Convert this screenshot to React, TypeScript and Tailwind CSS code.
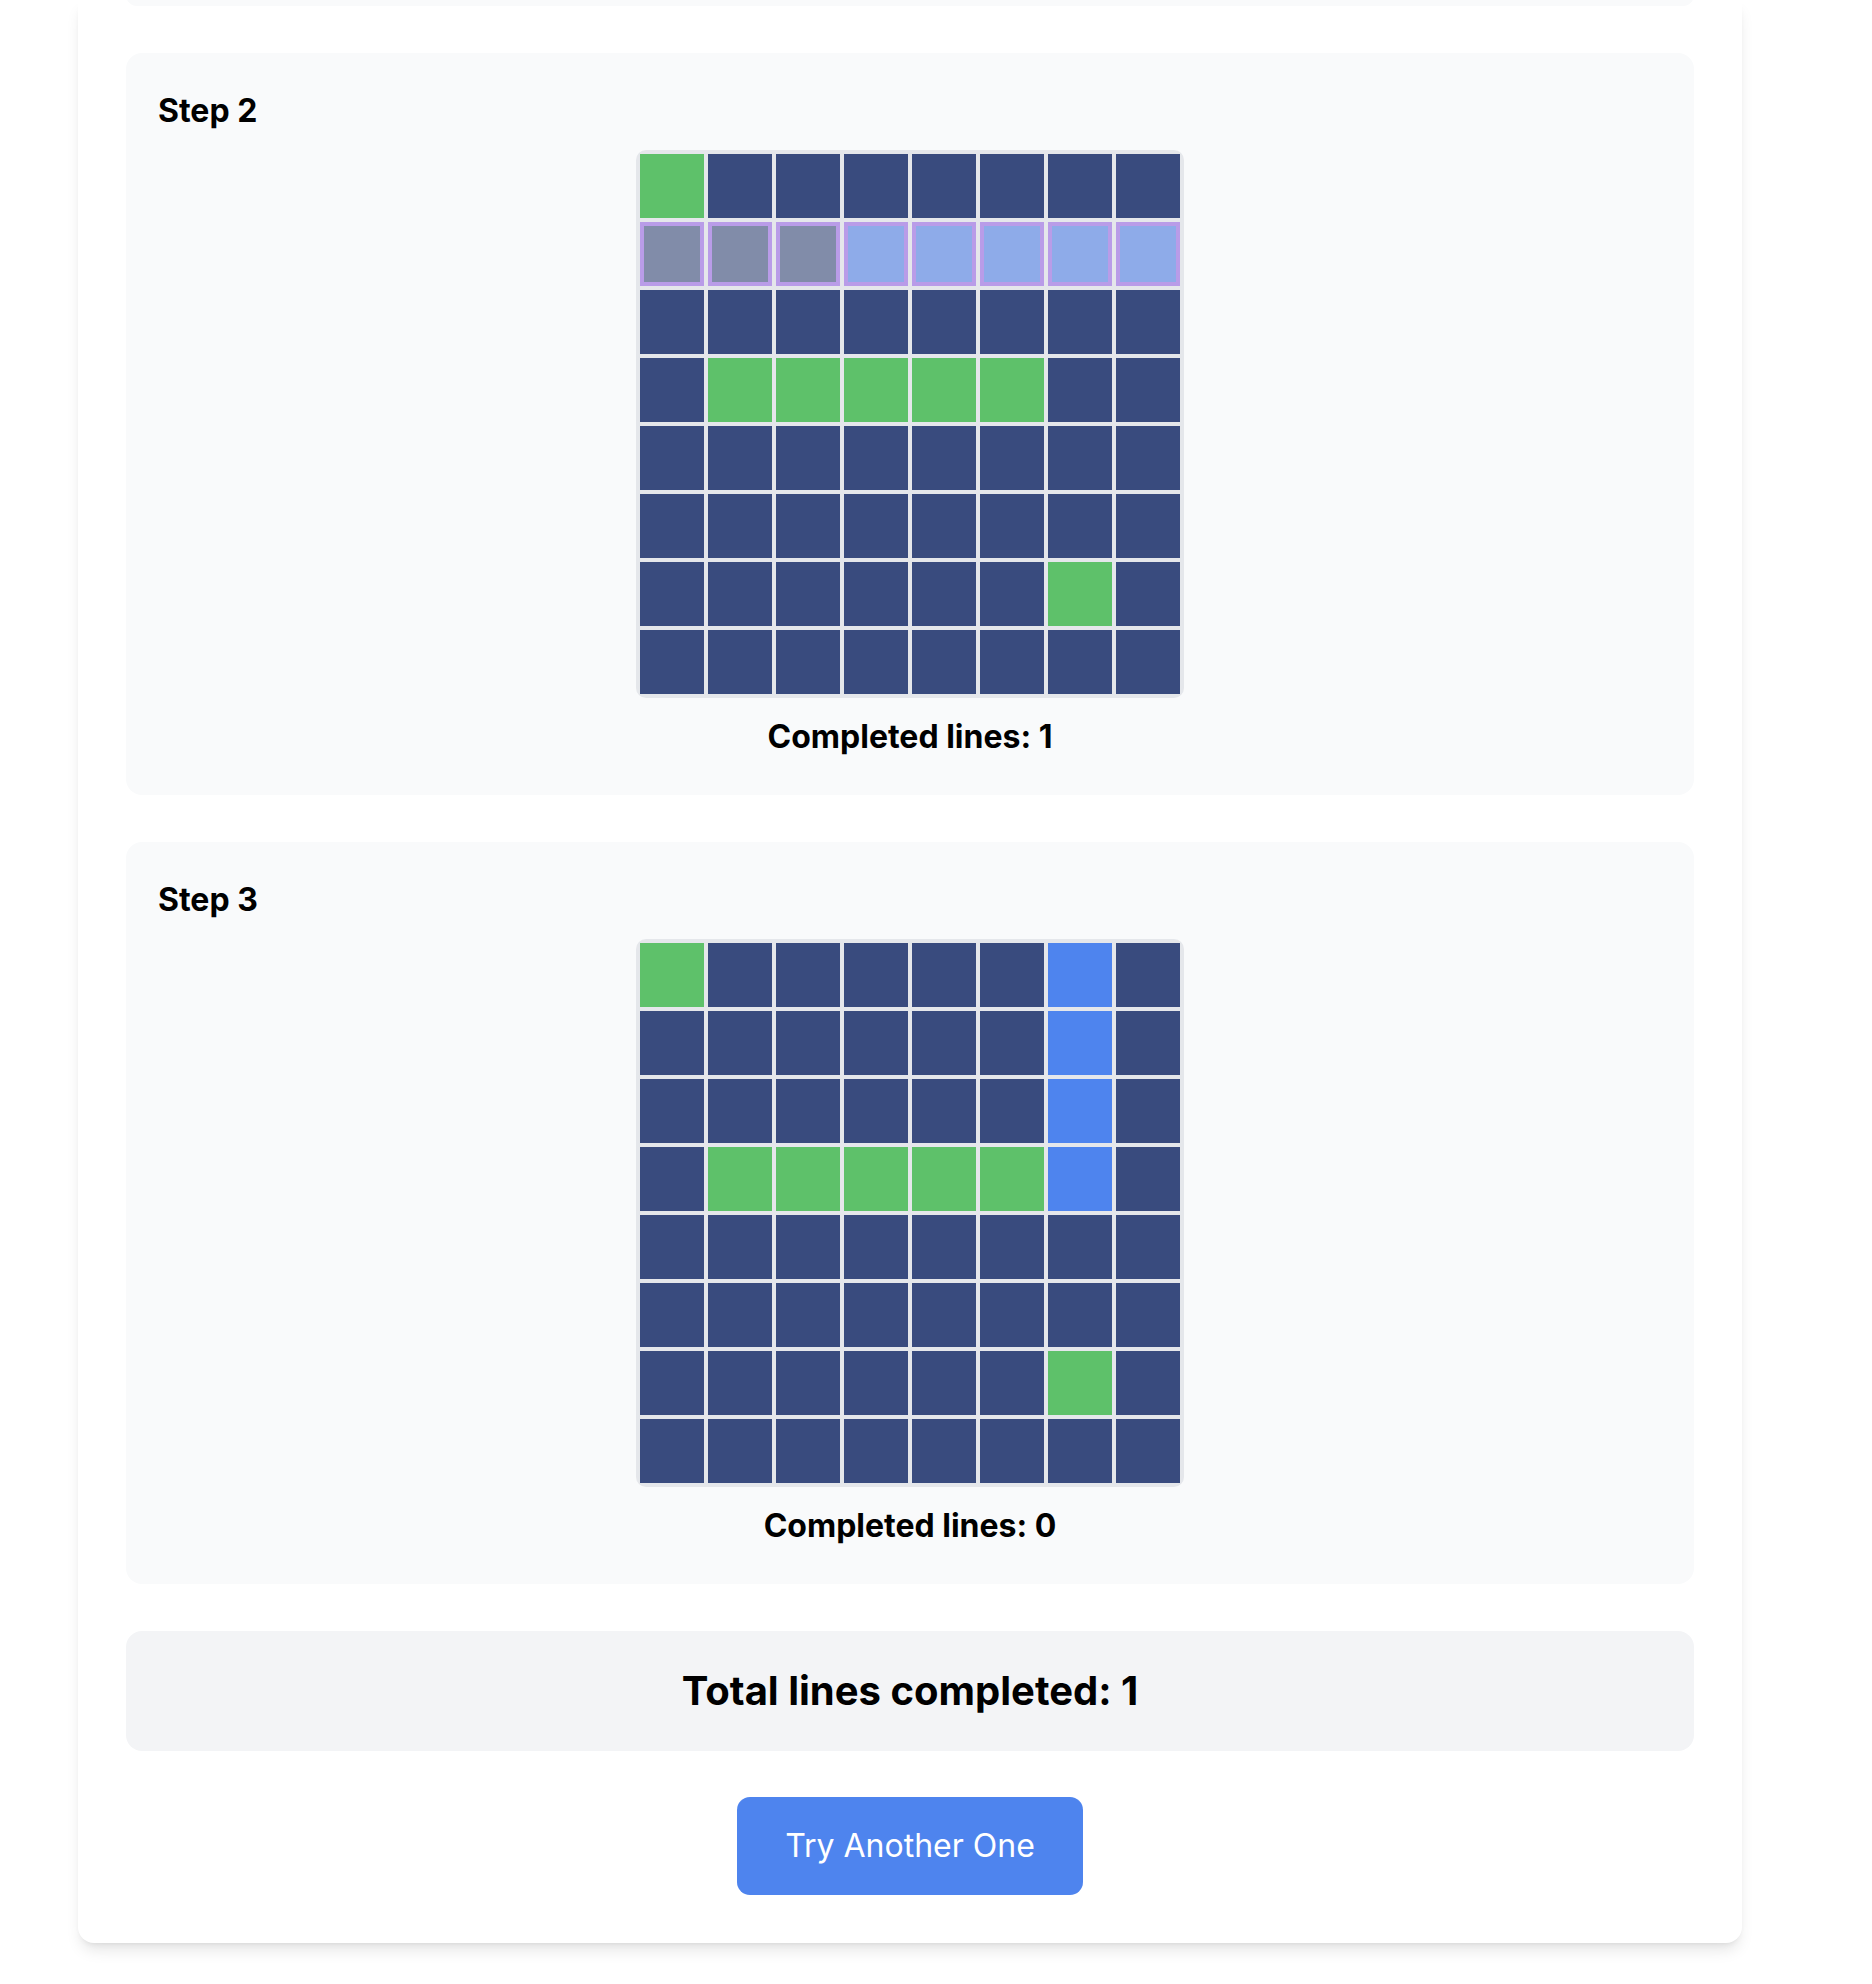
import React from 'react';

type Cell = 'D' | 'G' | 'B' | 'F' | 'L';

const step2: Cell[][] = [
  ['G', 'D', 'D', 'D', 'D', 'D', 'D', 'D'],
  ['F', 'F', 'F', 'L', 'L', 'L', 'L', 'L'],
  ['D', 'D', 'D', 'D', 'D', 'D', 'D', 'D'],
  ['D', 'G', 'G', 'G', 'G', 'G', 'D', 'D'],
  ['D', 'D', 'D', 'D', 'D', 'D', 'D', 'D'],
  ['D', 'D', 'D', 'D', 'D', 'D', 'D', 'D'],
  ['D', 'D', 'D', 'D', 'D', 'D', 'G', 'D'],
  ['D', 'D', 'D', 'D', 'D', 'D', 'D', 'D'],
];

const step3: Cell[][] = [
  ['G', 'D', 'D', 'D', 'D', 'D', 'B', 'D'],
  ['D', 'D', 'D', 'D', 'D', 'D', 'B', 'D'],
  ['D', 'D', 'D', 'D', 'D', 'D', 'B', 'D'],
  ['D', 'G', 'G', 'G', 'G', 'G', 'B', 'D'],
  ['D', 'D', 'D', 'D', 'D', 'D', 'D', 'D'],
  ['D', 'D', 'D', 'D', 'D', 'D', 'D', 'D'],
  ['D', 'D', 'D', 'D', 'D', 'D', 'G', 'D'],
  ['D', 'D', 'D', 'D', 'D', 'D', 'D', 'D'],
];

const cellClass: Record<Cell, string> = {
  D: 'bg-[#394b7e]',
  G: 'bg-[#5ec16a]',
  B: 'bg-[#4e84ee]',
  F: 'bg-[#818ca9] border-4 border-[#b99ce8]',
  L: 'bg-[#8eabe9] border-4 border-[#b99ce8]',
};

const Board: React.FC<{ grid: Cell[][] }> = ({ grid }) => (
  <div className="mx-auto w-fit rounded-[10px] bg-[#e5e7eb] p-[4px]">
    <div className="grid grid-cols-8 gap-[4px]">
      {grid.flat().map((c, i) => (
        <div key={i} className={`h-[64px] w-[64px] ${cellClass[c]}`}></div>
      ))}
    </div>
  </div>
);

const StepCard: React.FC<{ title: string; grid: Cell[][]; lines: number }> = ({ title, grid, lines }) => (
  <div className="mb-[47px] rounded-2xl bg-[#f9fafb] p-[32px]">
    <h3 className="mb-[16px] pt-[3px] text-[32px] leading-[46px] font-bold text-black">{title}</h3>
    <Board grid={grid} />
    <p className="mt-[16px] pb-[3px] text-center text-[32px] leading-[46px] font-bold text-black">
      Completed lines: {lines}
    </p>
  </div>
);

export default function App() {
  return (
    <div className="min-h-[1984px] bg-white font-['Inter',sans-serif]">
      <div className="ml-[78px] w-[1664px] rounded-b-2xl bg-white px-[48px] pb-[48px] shadow-lg">
        <div className="mb-[47px] h-[6px] overflow-hidden">
          <div className="-mt-[16px] h-[22px] rounded-2xl bg-[#f9fafb]"></div>
        </div>
        <StepCard title="Step 2" grid={step2} lines={1} />
        <StepCard title="Step 3" grid={step3} lines={0} />
        <div className="mb-[46px] rounded-2xl bg-[#f3f4f6] py-[32px] text-center">
          <h2 className="text-[40px] leading-[56px] font-bold text-black">Total lines completed: 1</h2>
        </div>
        <div className="flex justify-center">
          <button className="rounded-[13px] bg-[#4e84ee] px-[48px] py-[26px] text-[32px] leading-[46px] text-white">
            Try Another One
          </button>
        </div>
      </div>
    </div>
  );
}
